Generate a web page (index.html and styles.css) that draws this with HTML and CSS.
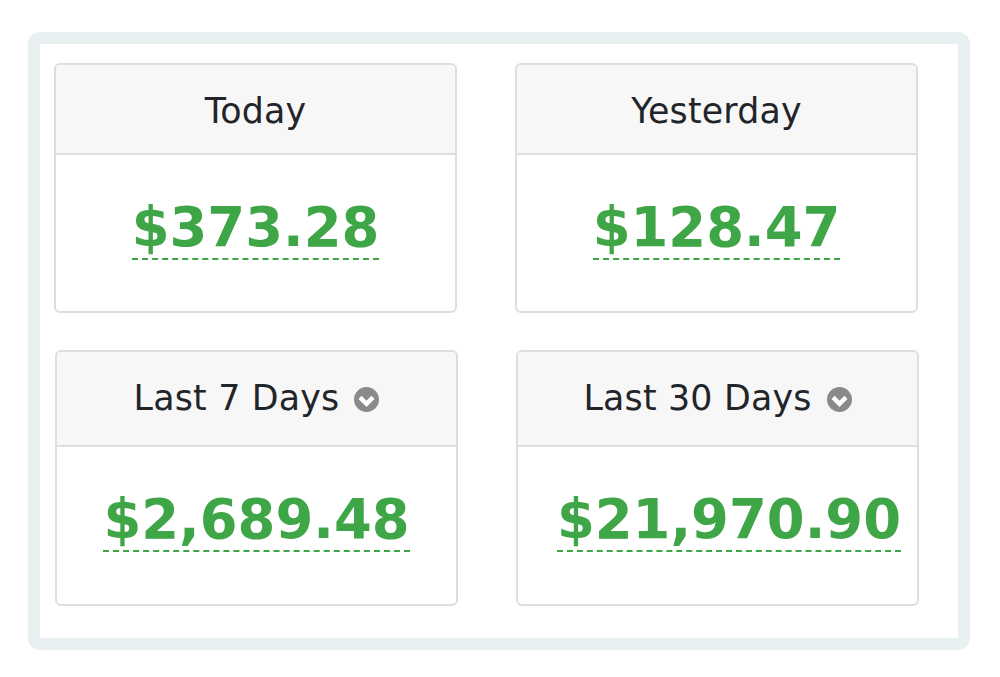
FILE: index.html
```html
<!DOCTYPE html>
<html lang="en">
<head>
<meta charset="utf-8">
<title>Earnings</title>
<link rel="stylesheet" href="styles.css">
</head>
<body>
<main class="frame">
  <section class="row row-top">
    <article class="card">
      <header class="card-head">Today</header>
      <div class="card-body"><span class="amount">$373.28</span></div>
    </article>
    <article class="card">
      <header class="card-head">Yesterday</header>
      <div class="card-body"><span class="amount">$128.47</span></div>
    </article>
  </section>
  <section class="row row-bottom">
    <article class="card">
      <header class="card-head">Last 7 Days
        <svg class="chev" viewBox="0 0 24 24" aria-hidden="true"><circle cx="12" cy="12" r="12" fill="#8a8a8a"/><path d="M5.800 10 12 16.200l6.200-6.200" fill="none" stroke="#fff" stroke-width="4.200"/></svg>
      </header>
      <div class="card-body"><span class="amount">$2,689.48</span></div>
    </article>
    <article class="card">
      <header class="card-head">Last 30 Days
        <svg class="chev" viewBox="0 0 24 24" aria-hidden="true"><circle cx="12" cy="12" r="12" fill="#8a8a8a"/><path d="M5.800 10 12 16.200l6.200-6.200" fill="none" stroke="#fff" stroke-width="4.200"/></svg>
      </header>
      <div class="card-body body-end"><span class="amount">$21,970.90</span></div>
    </article>
  </section>
</main>
</body>
</html>
```
FILE: styles.css
```css
* { box-sizing: border-box; }
html, body { margin: 0; padding: 0; background: #fff; }
body {
  height: 677px;
  overflow: hidden;
  padding: 32px 0 0 28px;
  font-family: "DejaVu Sans", sans-serif;
}
.frame {
  width: 942px;
  height: 618px;
  border: 12px solid #e8f0f1;
  border-radius: 12px;
  padding: 19px 0 0 14px;
  background: #fff;
}
.row {
  display: flex;
  gap: 58px;
}
.row-top { margin-bottom: 37px; }
.row-bottom { padding-left: 1px; }
.card {
  width: 403px;
  border: 2px solid #dedede;
  border-radius: 6px;
  background: #fff;
  overflow: hidden;
}
.row-top .card { height: 250px; }
.row-bottom .card { height: 256px; }
.card-head {
  display: flex;
  align-items: center;
  justify-content: center;
  gap: 15px;
  background: #f7f7f7;
  border-bottom: 2px solid #dedede;
  color: #212529;
  font-size: 34.8px;
  line-height: 40px;
  letter-spacing: 0.2px;
}
.row-top .card-head { height: 90px; padding-top: 3px; }
.row-bottom .card-head { height: 95px; padding-bottom: 2px; }
.chev { width: 25px; height: 25px; flex: none; margin-top: 3px; }
.card-body {
  display: flex;
  justify-content: center;
  padding-top: 43px;
}
.row-bottom .body-end { justify-content: flex-end; padding-right: 16px; }
.amount {
  color: #3fa648;
  font-size: 54.4px;
  font-weight: 700;
  line-height: 60px;
  border-bottom: 2px dashed #3fa648;
}
```
